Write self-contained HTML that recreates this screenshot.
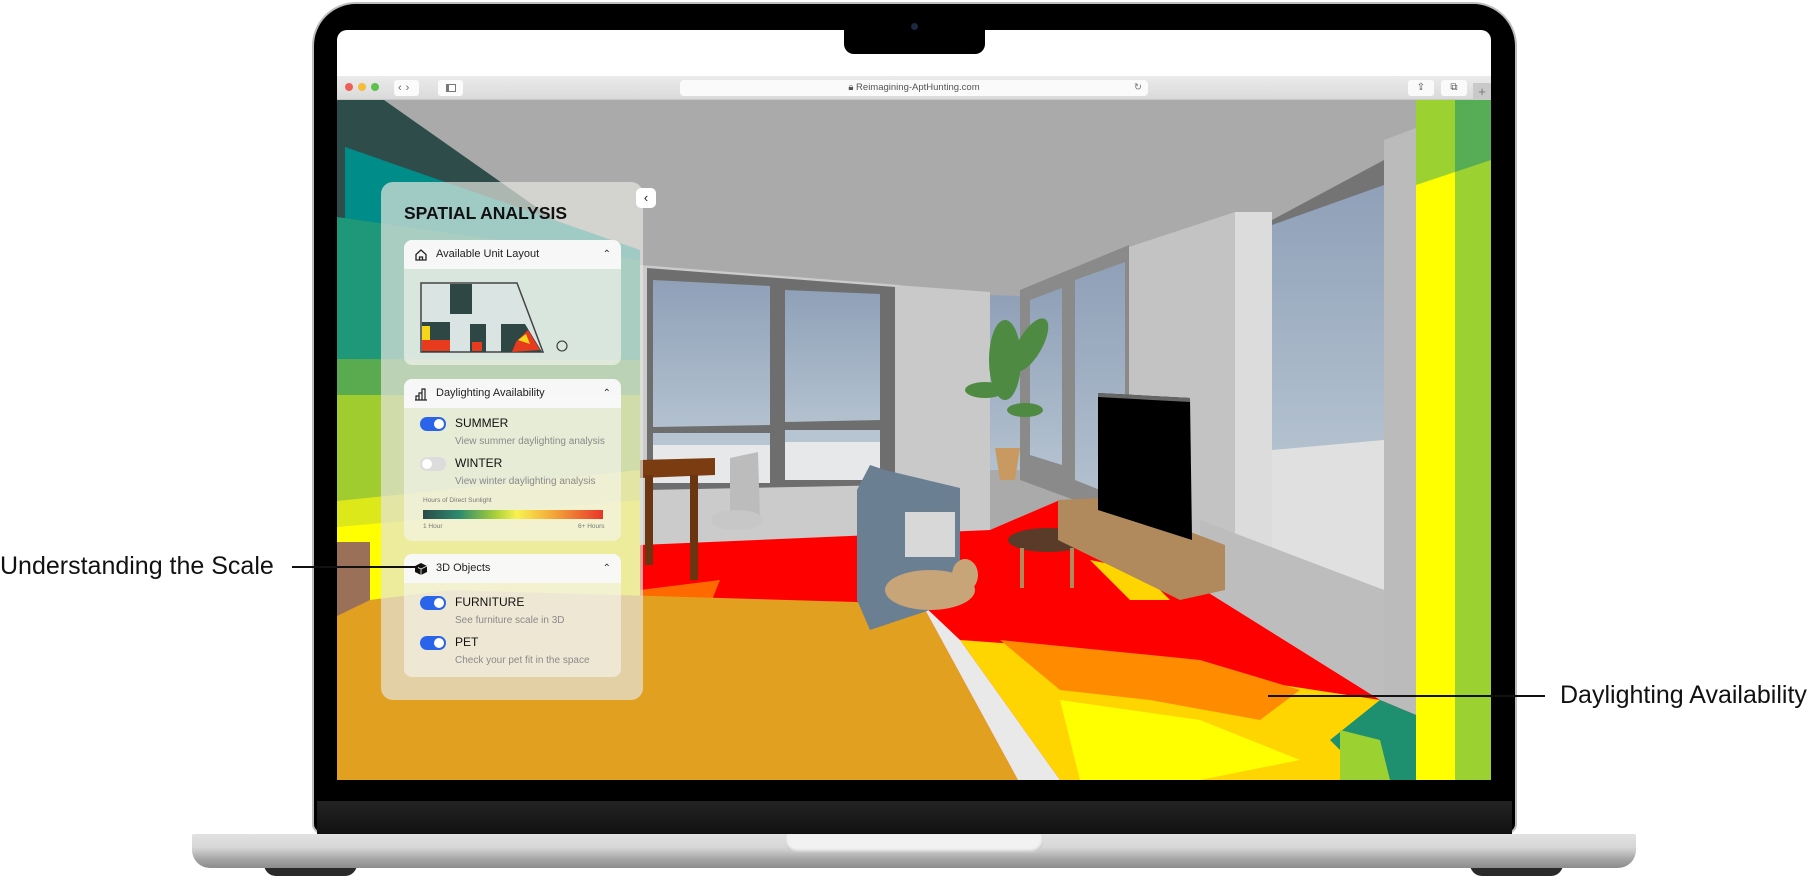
<!DOCTYPE html>
<html><head><meta charset="utf-8">
<style>
*{margin:0;padding:0;box-sizing:border-box}
body{width:1811px;height:876px;background:#fff;position:relative;overflow:hidden;font-family:"Liberation Sans",sans-serif;color:#111}
.abs{position:absolute}
.lbl{position:absolute;font-size:25px;color:#111;white-space:nowrap}
.card{position:absolute;left:404px;width:217px;background:rgba(246,246,240,.62);border-radius:8px}
.hdr{height:29px;background:rgba(248,248,248,.96);border-radius:8px 8px 0 0;position:relative;font-size:11px;line-height:29px;padding-left:32px;color:#222}
.hdr .car{position:absolute;right:10px;top:0;font-size:10px;color:#333}
.tg{position:absolute;left:16px;width:26px;height:14px;border-radius:7px;background:#2a64e8}
.tg::after{content:"";position:absolute;right:2px;top:2px;width:10px;height:10px;border-radius:5px;background:#fff}
.tg.off{background:#dcdcdc}
.tg.off::after{left:2px;right:auto}
.tl{position:absolute;left:51px;font-size:12px;color:#111}
.ts{position:absolute;left:51px;font-size:10px;color:#8a8a8a}
</style></head><body>

<div class="abs" style="left:264px;top:862px;width:93px;height:14px;background:#2a2a2a;border-radius:0 0 12px 12px"></div>
<div class="abs" style="left:1470px;top:862px;width:93px;height:14px;background:#2a2a2a;border-radius:0 0 12px 12px"></div>
<div class="abs" style="left:192px;top:834px;width:1444px;height:34px;border-radius:2px 2px 18px 18px;background:linear-gradient(#e2e2e2 0%,#d6d6d6 40%,#a4a4a4 75%,#8c8c8c 100%)"></div>
<div class="abs" style="left:785px;top:834px;width:258px;height:19px;border-radius:0 0 12px 12px;background:#f2f2f2;box-shadow:inset 0 -2px 3px #bbb"></div>

<div class="abs" style="left:312px;top:2px;width:1205px;height:832px;background:#000;border-radius:44px 44px 10px 10px;border:2px solid #bdbdbd"></div>
<div class="abs" style="left:317px;top:801px;width:1195px;height:33px;background:linear-gradient(#232323,#111)"></div>

<div class="abs" style="left:337px;top:30px;width:1154px;height:46px;background:#fff;border-radius:10px 10px 0 0"></div>
<div class="abs" style="left:844px;top:28px;width:141px;height:26px;background:#000;border-radius:0 0 10px 10px"></div>
<div class="abs" style="left:911px;top:23px;width:7px;height:7px;border-radius:4px;background:#1a2a40"></div>

<div class="abs" style="left:337px;top:76px;width:1154px;height:24px;background:linear-gradient(#ebebeb,#dadada);border-bottom:1px solid #c8c8c8"></div>
<div class="abs" style="left:345px;top:83px;width:8px;height:8px;border-radius:4px;background:#ed5f57"></div>
<div class="abs" style="left:358px;top:83px;width:8px;height:8px;border-radius:4px;background:#f5bd3a"></div>
<div class="abs" style="left:371px;top:83px;width:8px;height:8px;border-radius:4px;background:#5cc24a"></div>
<div class="abs" style="left:394px;top:80px;width:25px;height:16px;background:#fbfbfb;border-radius:3px;font-size:11px;line-height:16px;color:#666;letter-spacing:4px;padding-left:4px">‹›</div>
<div class="abs" style="left:438px;top:80px;width:25px;height:16px;background:#fbfbfb;border-radius:3px"><div class="abs" style="left:8px;top:4px;width:10px;height:8px;border:1px solid #777;border-left-width:3px"></div></div>
<div class="abs" style="left:680px;top:80px;width:468px;height:16px;background:#fafafa;border-radius:4px;font-size:9.5px;line-height:16px;color:#555;text-align:center">🔒&#xFE0E; Reimagining-AptHunting.com<span style="position:absolute;right:6px;color:#777">↻</span></div>
<div class="abs" style="left:1408px;top:80px;width:26px;height:16px;background:#fafafa;border-radius:3px;font-size:10px;text-align:center;line-height:16px;color:#555">⇪</div>
<div class="abs" style="left:1441px;top:80px;width:26px;height:16px;background:#fafafa;border-radius:3px;font-size:10px;text-align:center;line-height:16px;color:#555">⧉</div>
<div class="abs" style="left:1473px;top:83px;width:18px;height:17px;background:#c9c9c9;font-size:13px;text-align:center;line-height:17px;color:#777">+</div>

<svg class="abs" style="left:337px;top:100px" width="1154" height="680" viewBox="337 100 1154 680">
<rect x="337" y="100" width="1154" height="680" fill="#aaaaaa"/>
<polygon points="337,100 384,100 640,280 640,780 337,780" fill="#2e4d4a"/>
<polygon points="345,147 640,250 640,780 345,780" fill="#008c88"/>
<polygon points="337,217 640,260 640,780 337,780" fill="#1e9878"/>
<polygon points="337,359 640,360 640,780 337,780" fill="#5aab50"/>
<polygon points="337,395 640,395 640,780 337,780" fill="#a0cc30"/>
<polygon points="337,501 640,470 640,780 337,780" fill="#dde81a"/>
<polygon points="337,527 640,500 640,780 337,780" fill="#ffff00"/>
<rect x="337" y="542" width="33" height="74" fill="#9a7058"/>
<!-- back wall -->
<polygon points="640,265 900,285 900,540 640,545" fill="#cbcbcb"/>
<polygon points="647,268 895,287 895,485 647,490" fill="#6e6e6e"/>
<polygon points="653,280 770,286 770,425 653,427" fill="url(#sky)"/>
<polygon points="785,290 880,294 880,420 785,422" fill="url(#sky)"/>
<rect x="653" y="435" width="117" height="48" fill="#e6e8ea"/>
<rect x="785" y="432" width="95" height="48" fill="#e6e8ea"/>
<rect x="653" y="433" width="117" height="12" fill="#b7c4d2"/>
<rect x="785" y="430" width="95" height="12" fill="#b7c4d2"/>
<polygon points="895,285 990,292 990,560 895,560" fill="#c9c9c9"/>
<polygon points="990,295 1020,296 1020,470 990,470" fill="url(#sky)"/>
<polygon points="1020,290 1129,245 1129,520 1020,480" fill="#8a8a8a"/>
<polygon points="1030,300 1062,288 1062,465 1030,455" fill="url(#sky)"/>
<polygon points="1075,280 1125,262 1125,500 1075,480" fill="url(#sky)"/>
<polygon points="1129,247 1235,212 1235,560 1129,520" fill="#c3c3c3"/>
<polygon points="1235,212 1272,212 1272,560 1235,560" fill="#dcdcdc"/>
<polygon points="1272,220 1384,160 1384,520 1272,540" fill="#747474"/>
<polygon points="1272,225 1384,185 1384,450 1272,450" fill="url(#sky)"/>
<polygon points="1272,450 1384,440 1384,590 1272,550" fill="#e0e0e0"/>
<polygon points="1384,140 1416,128 1416,780 1384,780" fill="#bbbbbb"/>
<polygon points="1200,520 1384,590 1384,780 1200,780" fill="#bdbdbd"/>
<rect x="1416" y="100" width="39" height="680" fill="#ffff00"/>
<polygon points="1416,100 1455,100 1455,172 1416,185" fill="#9bd130"/>
<rect x="1455" y="100" width="36" height="680" fill="#9bd130"/>
<polygon points="1455,100 1491,100 1491,160 1455,172" fill="#57ad55"/>
<!-- floor -->
<polygon points="640,545 990,530 1060,500 1380,700 1416,715 1416,780 640,780" fill="#ff0000"/>
<polygon points="960,640 1100,650 1250,680 1380,700 1416,720 1416,780 1060,780" fill="#ffd500"/>
<polygon points="1000,640 1100,650 1200,660 1300,690 1260,720 1150,700 1060,690" fill="#ff8c00"/>
<polygon points="1060,700 1200,720 1300,760 1200,780 1080,780" fill="#ffff00"/>
<polygon points="1380,700 1416,715 1416,780 1370,780 1330,740" fill="#1e9070"/>
<polygon points="1340,730 1380,740 1390,780 1340,780" fill="#9bd130"/>
<polygon points="640,590 720,580 700,630 640,640" fill="#ff6a00"/>
<polygon points="1090,560 1140,570 1170,600 1130,600" fill="#ffd500"/>
<!-- rug -->
<polygon points="337,616 370,600 450,590 922,604 1018,780 337,780" fill="#e2a020"/>
<polygon points="922,604 1018,780 1060,780 960,640" fill="#e9e9e9"/>
<polygon points="640,460 715,458 715,475 640,478" fill="#7a3c10"/>
<rect x="690" y="475" width="8" height="105" fill="#6a3510"/>
<rect x="645" y="475" width="8" height="90" fill="#6a3510"/>
<polygon points="730,458 758,452 760,520 730,522" fill="#bcbcbc"/>
<ellipse cx="737" cy="520" rx="26" ry="10" fill="#c7c7c7"/>
<polygon points="857,490 870,465 885,470 960,488 960,600 870,630 857,600" fill="#6b7f93"/>
<rect x="905" y="512" width="50" height="45" fill="#d8d8d8"/>
<ellipse cx="930" cy="590" rx="45" ry="20" fill="#c7a579"/>
<ellipse cx="965" cy="575" rx="13" ry="16" fill="#c7a579"/>
<ellipse cx="1048" cy="540" rx="40" ry="12" fill="#5a3a28"/>
<rect x="1020" y="548" width="4" height="40" fill="#b08a5c"/>
<rect x="1070" y="548" width="4" height="40" fill="#b08a5c"/>
<polygon points="1058,500 1100,498 1225,545 1225,590 1180,600 1058,540" fill="#b08a5c"/>
<polygon points="1098,393 1190,398 1192,540 1098,510" fill="#000"/>
<polygon points="1098,393 1190,398 1190,402 1098,397" fill="#666"/>
<polygon points="995,448 1020,448 1015,480 1000,480" fill="#c89a62"/>
<ellipse cx="1005" cy="360" rx="16" ry="40" fill="#4f8a43"/>
<ellipse cx="1030" cy="345" rx="12" ry="30" fill="#4f8a43" transform="rotate(30 1030 345)"/>
<ellipse cx="985" cy="390" rx="20" ry="8" fill="#4f8a43"/>
<ellipse cx="1025" cy="410" rx="18" ry="7" fill="#4f8a43"/>
<defs><linearGradient id="sky" x1="0" y1="0" x2="0" y2="1"><stop offset="0" stop-color="#8fa0b8"/><stop offset="1" stop-color="#b3c1cf"/></linearGradient></defs>
</svg>

<div class="abs" style="left:381px;top:182px;width:262px;height:518px;background:rgba(228,228,222,.7);border-radius:12px"></div>
<div class="abs" style="left:636px;top:188px;width:20px;height:20px;background:#fff;border-radius:5px;font-size:13px;text-align:center;line-height:19px;color:#222">‹</div>
<div class="abs" style="left:404px;top:203px;font-size:17.5px;font-weight:bold;color:#111">SPATIAL ANALYSIS</div>

<div class="card" style="top:240px;height:125px">
  <div class="hdr">Available Unit Layout<span class="car">⌃</span>
  <svg class="abs" style="left:10px;top:8px" width="14" height="14" viewBox="0 0 14 14"><path d="M2 6.5L7 2l5 4.5V12H2z M5.5 12V9h3v3" fill="none" stroke="#222" stroke-width="1.3"/></svg></div>
  <svg class="abs" style="left:16px;top:42px" width="150" height="74" viewBox="0 0 150 74">
    <polygon points="1,1 97,1 123,70 1,70" fill="#d9e4e3" stroke="#444" stroke-width="1.5"/>
    <rect x="30" y="2" width="22" height="30" fill="#2f4744"/>
    <rect x="2" y="40" width="28" height="30" fill="#2f4744"/>
    <rect x="50" y="42" width="16" height="28" fill="#2f4744"/>
    <polygon points="81,42 105,42 122,70 81,70" fill="#2f4744"/>
    <rect x="2" y="58" width="28" height="11" fill="#e83a1d"/>
    <rect x="2" y="44" width="8" height="14" fill="#f6d618"/>
    <polygon points="96,60 108,48 120,68 92,70" fill="#e83a1d"/>
    <polygon points="98,58 106,52 110,62" fill="#f6d618"/>
    <rect x="52" y="60" width="10" height="9" fill="#e83a1d"/>
    <circle cx="142" cy="64" r="5" fill="none" stroke="#333" stroke-width="1.1"/>
  </svg>
</div>

<div class="card" style="top:379px;height:162px">
  <div class="hdr">Daylighting Availability<span class="car">⌃</span>
  <svg class="abs" style="left:10px;top:8px" width="14" height="14" viewBox="0 0 14 14"><path d="M1 13h12M2 13V9h3v4M5 13V6h3v7M8 13V2h3v11" fill="none" stroke="#222" stroke-width="1.2"/></svg></div>
  <div class="tg" style="top:38px"></div><div class="tl" style="top:37px">SUMMER</div>
  <div class="ts" style="top:57px">View summer daylighting analysis</div>
  <div class="tg off" style="top:78px"></div><div class="tl" style="top:77px">WINTER</div>
  <div class="ts" style="top:97px">View winter daylighting analysis</div>
  <div class="abs" style="left:19px;top:118px;font-size:6.5px;color:#777">Hours of Direct Sunlight</div>
  <div class="abs" style="left:19px;top:131px;width:180px;height:9px;background:linear-gradient(90deg,#2b4a4a,#2e8a6e 20%,#a6cf3a 40%,#f7f250 52%,#f4a83a 72%,#e8352a)"></div>
  <div class="abs" style="left:19px;top:144px;font-size:6.5px;color:#777">1 Hour</div>
  <div class="abs" style="left:174px;top:144px;font-size:6.5px;color:#777">6+ Hours</div>
</div>

<div class="card" style="top:554px;height:123px">
  <div class="hdr">3D Objects<span class="car">⌃</span>
  <svg class="abs" style="left:10px;top:8px" width="14" height="14" viewBox="0 0 14 14"><path d="M7 1L13 4V10L7 13L1 10V4Z" fill="#111"/><path d="M1 4L7 7L13 4M7 7V13" fill="none" stroke="#eee" stroke-width=".8"/></svg></div>
  <div class="tg" style="top:42px"></div><div class="tl" style="top:41px">FURNITURE</div>
  <div class="ts" style="top:61px">See furniture scale in 3D</div>
  <div class="tg" style="top:82px"></div><div class="tl" style="top:81px">PET</div>
  <div class="ts" style="top:101px">Check your pet fit in the space</div>
</div>

<div class="lbl" style="left:0;top:552px">Understanding the Scale</div>
<div class="abs" style="left:292px;top:566px;width:126px;height:2px;background:#111"></div>
<div class="lbl" style="left:1560px;top:681px">Daylighting Availability</div>
<div class="abs" style="left:1268px;top:695px;width:277px;height:2px;background:#111"></div>
</body></html>
